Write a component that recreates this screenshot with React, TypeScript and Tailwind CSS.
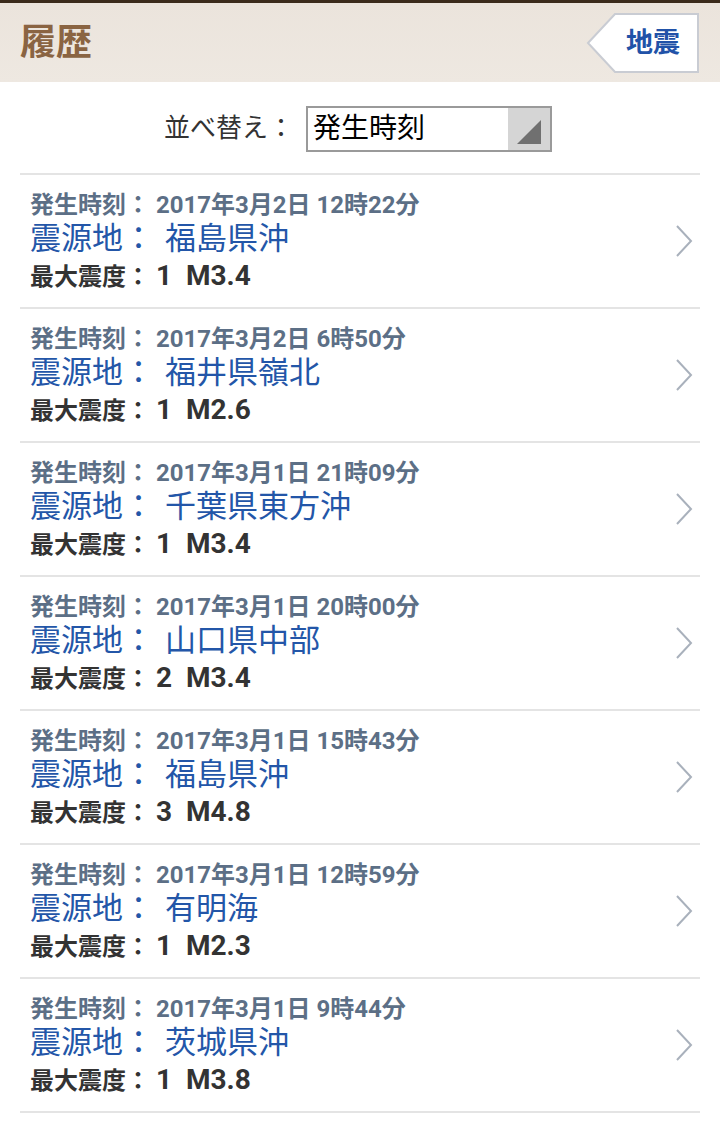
import React from 'react';

const rows = [
  { time: "2017年3月2日 12時22分", place: "福島県沖", shindo: "1", mag: "M3.4" },
  { time: "2017年3月2日 6時50分", place: "福井県嶺北", shindo: "1", mag: "M2.6" },
  { time: "2017年3月1日 21時09分", place: "千葉県東方沖", shindo: "1", mag: "M3.4" },
  { time: "2017年3月1日 20時00分", place: "山口県中部", shindo: "2", mag: "M3.4" },
  { time: "2017年3月1日 15時43分", place: "福島県沖", shindo: "3", mag: "M4.8" },
  { time: "2017年3月1日 12時59分", place: "有明海", shindo: "1", mag: "M2.3" },
  { time: "2017年3月1日 9時44分", place: "茨城県沖", shindo: "1", mag: "M3.8" },
];

const font = "font-['Roboto','Noto_Sans_CJK_JP',sans-serif]";

const Chevron = () => (
  <svg width="20" height="34" viewBox="0 0 20 34" className="shrink-0">
    <path d="M3 2 L17 17 L3 32" fill="none" stroke="#a9b1bc" strokeWidth="2" />
  </svg>
);

export default function App() {
  return (
    <div className={`w-[720px] min-h-[1124px] bg-white ${font}`}>
      {/* header */}
      <div className="h-[3px] bg-[#3b2b1c]" />
      <header className="h-[79px] bg-gradient-to-b from-[#ebe4dc] to-[#eee8e1] flex items-center justify-between pl-[20px] pr-[20px]">
        <h1 className="text-[36px] font-bold text-[#8a6442] leading-none">履歴</h1>
        <div className="relative w-[114px] h-[60px] mt-[1px]">
          <svg width="114" height="60" viewBox="0 0 114 60" className="absolute inset-0">
            <polygon points="2,30 29,1 112,1 112,59 29,59" fill="#ffffff" stroke="#c9ccd3" strokeWidth="2" />
          </svg>
          <span className="absolute left-[40px] top-0 h-[60px] flex items-center text-[27px] font-bold text-[#2152a8]">地震</span>
        </div>
      </header>

      {/* sort */}
      <div className="flex items-center justify-center h-[91px] pt-[2px] pr-[4px]">
        <span className="text-[26px] text-[#333] mr-[12px]">並べ替え：</span>
        <div className="flex w-[246px] h-[46px] border-2 border-[#9a9a9a] bg-white">
          <span className="flex-1 pl-[5px] flex items-center text-[28px] text-black">発生時刻</span>
          <div className="w-[42px] bg-[#d5d5d5] flex items-end justify-center pb-[6px]">
            <svg width="24" height="24" viewBox="0 0 24 24">
              <polygon points="24,0 24,24 0,24" fill="#707070" />
            </svg>
          </div>
        </div>
      </div>

      {/* list */}
      <ul className="mx-[20px] border-t-2 border-[#e4e4e4]">
        {rows.map((r, i) => (
          <li key={i} className="flex items-center border-b-2 border-[#e4e4e4] h-[134px] pl-[10px] pr-[6px]">
            <div className="flex-1 pt-[1px]">
              <div className="text-[24px] font-bold text-[#5c6f86] leading-[28px] whitespace-pre">
                {"発生時刻： " + r.time}
              </div>
              <div className="text-[31px] text-[#2356a8] leading-[34px] mt-[3px] flex">
                <span>震源地：</span>
                <span className="ml-[11px]">{r.place}</span>
              </div>
              <div className="text-[24px] font-bold text-[#333333] leading-[30px] mt-[5px] whitespace-pre flex items-baseline">
                <span>最大震度：</span>
                <span className="text-[28px] ml-[6px]">{r.shindo + "  " + r.mag}</span>
              </div>
            </div>
            <Chevron />
          </li>
        ))}
      </ul>
    </div>
  );
}
